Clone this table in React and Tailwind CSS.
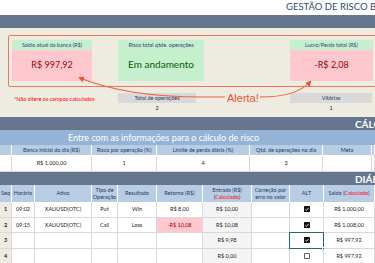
import React from "react";

const FONT = "font-['Lato','Open_Sans',sans-serif]";

const topCols = [12, 80, 65, 93, 73, 49, 3];
const tableCols = [12, 23, 57, 26, 39, 46, 49, 38, 34, 51];

const rows = [
  { seq: "1", hora: "09:02", ativo: "XAUUSD(OTC)", tipo: "Put", res: "Win", ret: "R$ 8,00", ent: "R$ 10,00", alt: true, saldo: "R$ 1.000,00" },
  { seq: "2", hora: "09:15", ativo: "XAUUSD(OTC)", tipo: "Call", res: "Loss", ret: "-R$ 10,08", loss: true, ent: "R$ 10,08", alt: true, saldo: "R$ 1.008,00" },
  { seq: "3", hora: "", ativo: "", tipo: "", res: "", ret: "", ent: "R$ 9,98", alt: true, selected: true, saldo: "R$ 997,92" },
  { seq: "4", hora: "", ativo: "", tipo: "", res: "", ret: "", ent: "R$ 0,00", alt: false, saldo: "R$ 997,92" },
];

function Check({ on }) {
  return (
    <svg width="6" height="6" viewBox="0 0 7 7">
      {on ? (
        <>
          <rect x="0" y="0" width="7" height="7" rx="0.6" fill="#111" />
          <path d="M1.6 3.7 L3 5 L5.5 2.1" stroke="#fff" strokeWidth="1" fill="none" />
        </>
      ) : (
        <rect x="0.5" y="0.5" width="6" height="6" rx="0.6" fill="#fff" stroke="#222" strokeWidth="0.9" />
      )}
    </svg>
  );
}

function SummaryCard({ label, value, width }) {
  return (
    <div className="flex flex-col" style={{ width }}>
      <div className="h-[10px] bg-[#c6efce] text-[5.5px] leading-[10px] text-center text-[#1f497d] whitespace-nowrap">{label}</div>
      <div className="flex-1 flex items-center justify-center pb-[2px] bg-[#ffc7ce] text-[#9c0006] text-[9px]">{value}</div>
    </div>
  );
}

function DarkBar({ label }) {
  return (
    <div className="h-[13px] bg-[#67768f] flex items-center overflow-hidden">
      {label ? <span className="pl-[355px] text-[10px] font-bold text-white whitespace-nowrap leading-none">{label}</span> : null}
    </div>
  );
}

export default function App() {
  return (
    <div className={`relative w-[375px] h-[263px] overflow-hidden bg-white ${FONT}`}>
      <div className="h-[15px] flex items-start">
        <span className="pl-[286px] pt-[1px] text-[9.5px] leading-[12px] text-[#2c4a78] whitespace-nowrap">GESTÃO DE RISCO BANCA</span>
      </div>
      <DarkBar />

      <div className="relative h-[89px] bg-[#eeece1] pt-[12px]">
        <div className="flex h-[41px] pl-[12px]">
          <SummaryCard label="Saldo atual da banca (R$)" value="R$ 997,92" width={80} />
          <div className="w-[26px]" />
          <div className="w-[86px] bg-[#c6efce] flex flex-col items-center">
            <div className="h-[10px] text-[5.5px] leading-[10px] text-[#1f497d] whitespace-nowrap">Risco total qtde. operações</div>
            <div className="flex-1 flex items-center pb-[3px] text-[10px] text-[#006100]">Em andamento</div>
          </div>
          <div className="w-[86px]" />
          <SummaryCard label="Lucro/Perda total (R$)" value="-R$ 2,08" width={83} />
        </div>

        <div className="flex h-[10px] mt-[12px] items-center">
          <div className="w-[118px] pl-[14px] pt-[3px] text-[5.5px] text-[#ff0000] whitespace-nowrap">*Não altere os campos calculados</div>
          <div className="w-[78px] h-[10px] bg-[#d9d9d9] text-[5.5px] leading-[10px] text-center text-[#1f3864]">Total de operações</div>
          <div className="w-[94px] pl-[31px] text-[11px] leading-none text-[#f4502a] font-['Liberation_Sans',sans-serif]">Alerta!</div>
          <div className="w-[82px] h-[10px] bg-[#d9d9d9] text-[5.5px] leading-[10px] text-center text-[#1f3864]">Vitórias</div>
        </div>
        <div className="flex h-[10px] items-center text-[5.5px] text-[#222]">
          <div className="w-[118px]" />
          <div className="w-[78px] text-center">2</div>
          <div className="w-[94px]" />
          <div className="w-[82px] text-center">1</div>
        </div>

        <div className="absolute left-[8px] top-[7px] w-[380px] h-[52px] border border-[#f27558] rounded-[2px]" />
      </div>

      <DarkBar label="CÁLCULO" />

      <div className="h-[15px] bg-[#95b3d7] flex items-center">
        <span className="pl-[68px] text-[9px] text-white whitespace-nowrap">Entre com as informações para o cálculo de risco</span>
      </div>
      <div className="flex h-[10px] bg-[#b8cce4] text-[5.5px] text-[#1f3864]">
        {["", "Banca inicial do dia (R$)", "Risco por operação (%)", "Limite de perda diária (%)", "Qtd. de operações no dia", "Meta", ""].map((t, i) => (
          <div key={i} className="flex items-center justify-center border-r border-white whitespace-nowrap" style={{ width: topCols[i] }}>{t}</div>
        ))}
      </div>
      <div className="flex h-[17px] bg-white text-[5.5px] text-[#222]">
        {["", "R$ 1.000,00", "1", "4", "3", "", ""].map((t, i) => (
          <div key={i} className="flex items-center justify-center border-r border-b border-[#d9d9d9]" style={{ width: topCols[i] }}>{t}</div>
        ))}
      </div>

      <DarkBar label="DIÁRIO" />

      <div className="flex h-[17px] bg-[#b8cce4] text-[5.5px] leading-[7px] text-[#1f3864]">
        {[
          "Seq",
          "Horário",
          "Ativo",
          <>Tipo de<br />Operação</>,
          "Resultado",
          "Retorno (R$)",
          <>Entrada (R$)<br />(<span className="text-[#ff0000]">Calculado</span>)</>,
          <>Correção por<br />erro no valor</>,
          "ALT",
          <>Saldo (<span className="text-[#ff0000]">Calculado</span>)</>,
        ].map((t, i) => (
          <div key={i} className="flex items-center justify-center text-center border-r border-white whitespace-nowrap" style={{ width: tableCols[i] }}>
            <span>{t}</span>
          </div>
        ))}
      </div>

      {rows.map((r) => {
        const cells = [r.seq, r.hora, r.ativo, r.tipo, r.res, r.ret, r.ent, "", null, r.saldo];
        return (
          <div key={r.seq} className="flex h-[15.5px] text-[5.5px] text-[#222]">
            {cells.map((c, i) => {
              let cls = "bg-white";
              if (i === 0) cls = "bg-[#eeece1] font-bold justify-start pl-[4px]";
              if (i === 5 && r.loss) cls = "bg-[#ffc7ce] text-[#9c0006]";
              if (i === 6) cls = "bg-[#f4f4f4]";
              return (
                <div
                  key={i}
                  className={`relative flex items-center justify-center border-r border-b border-[#d9d9d9] whitespace-nowrap ${cls}`}
                  style={{ width: tableCols[i] }}
                >
                  {i === 8 ? <Check on={r.alt} /> : c}
                  {i === 8 && r.selected ? (
                    <>
                      <div className="absolute -left-px -top-px -right-px -bottom-px border-[1.5px] border-[#217346]" />
                      <div className="absolute -right-[2px] -bottom-[2px] w-[3px] h-[3px] bg-[#217346] border border-white" />
                    </>
                  ) : null}
                </div>
              );
            })}
          </div>
        );
      })}

      <svg className="absolute left-0 top-0 pointer-events-none" width="375" height="263" viewBox="0 0 375 263">
        <defs>
          <marker id="ah" markerWidth="6" markerHeight="6" refX="4" refY="3" orient="auto" markerUnits="userSpaceOnUse">
            <path d="M0 0 L6 3 L0 6 Z" fill="#f2522e" />
          </marker>
        </defs>
        <path d="M225 97 L202 97 C165 97 120 94 80 78" stroke="#f2603e" strokeWidth="1.1" fill="none" markerEnd="url(#ah)" />
        <path d="M260 97 C284 97 300 93 310 82" stroke="#f2603e" strokeWidth="1.1" fill="none" markerEnd="url(#ah)" />
      </svg>
    </div>
  );
}
